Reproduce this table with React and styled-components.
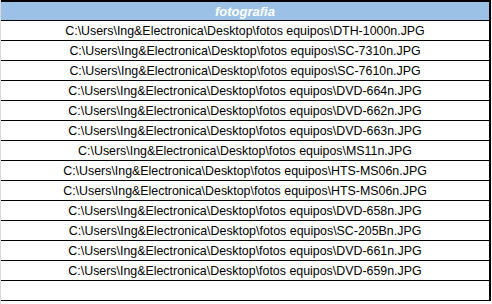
import styled, { createGlobalStyle } from "styled-components";

const Global = createGlobalStyle`
  body {
    margin: 0;
    background: #ffffff;
    font-family: "Liberation Sans", Arial, sans-serif;
  }
`;

const files = [
  "DTH-1000n.JPG",
  "SC-7310n.JPG",
  "SC-7610n.JPG",
  "DVD-664n.JPG",
  "DVD-662n.JPG",
  "DVD-663n.JPG",
  "MS11n.JPG",
  "HTS-MS06n.JPG",
  "HTS-MS06n.JPG",
  "DVD-658n.JPG",
  "SC-205Bn.JPG",
  "DVD-661n.JPG",
  "DVD-659n.JPG",
];

const BASE = "C:\\Users\\Ing&Electronica\\Desktop\\fotos equipos\\";

const Sheet = styled.div`
  width: 491px;
  height: 304px;
  border-left: 1px solid #d9d9d9;
  box-sizing: border-box;
`;

const Table = styled.div`
  width: 490px;
  border-top: 2px solid #000;
  border-right: 2px solid #000;
  box-sizing: border-box;
  display: flex;
  flex-direction: column;
`;

const HeaderCell = styled.div`
  height: 18px;
  background: #9bc2e6;
  border-bottom: 1px solid #000;
  color: #ffffff;
  font-weight: bold;
  font-style: italic;
  font-size: 13px;
  display: flex;
  align-items: center;
  justify-content: center;
`;

const Cell = styled.div`
  height: 17px;
  padding-top: 2px;
  border-bottom: 1px solid #000;
  color: #000;
  font-size: 12.4px;
  line-height: 17px;
  display: flex;
  align-items: center;
  justify-content: center;
  white-space: nowrap;
`;

export default function App() {
  return (
    <>
      <Global />
      <Sheet>
        <Table>
          <HeaderCell>fotografia</HeaderCell>
          {files.map((f, i) => (
            <Cell key={i}>{BASE + f}</Cell>
          ))}
          <Cell />
        </Table>
      </Sheet>
    </>
  );
}
